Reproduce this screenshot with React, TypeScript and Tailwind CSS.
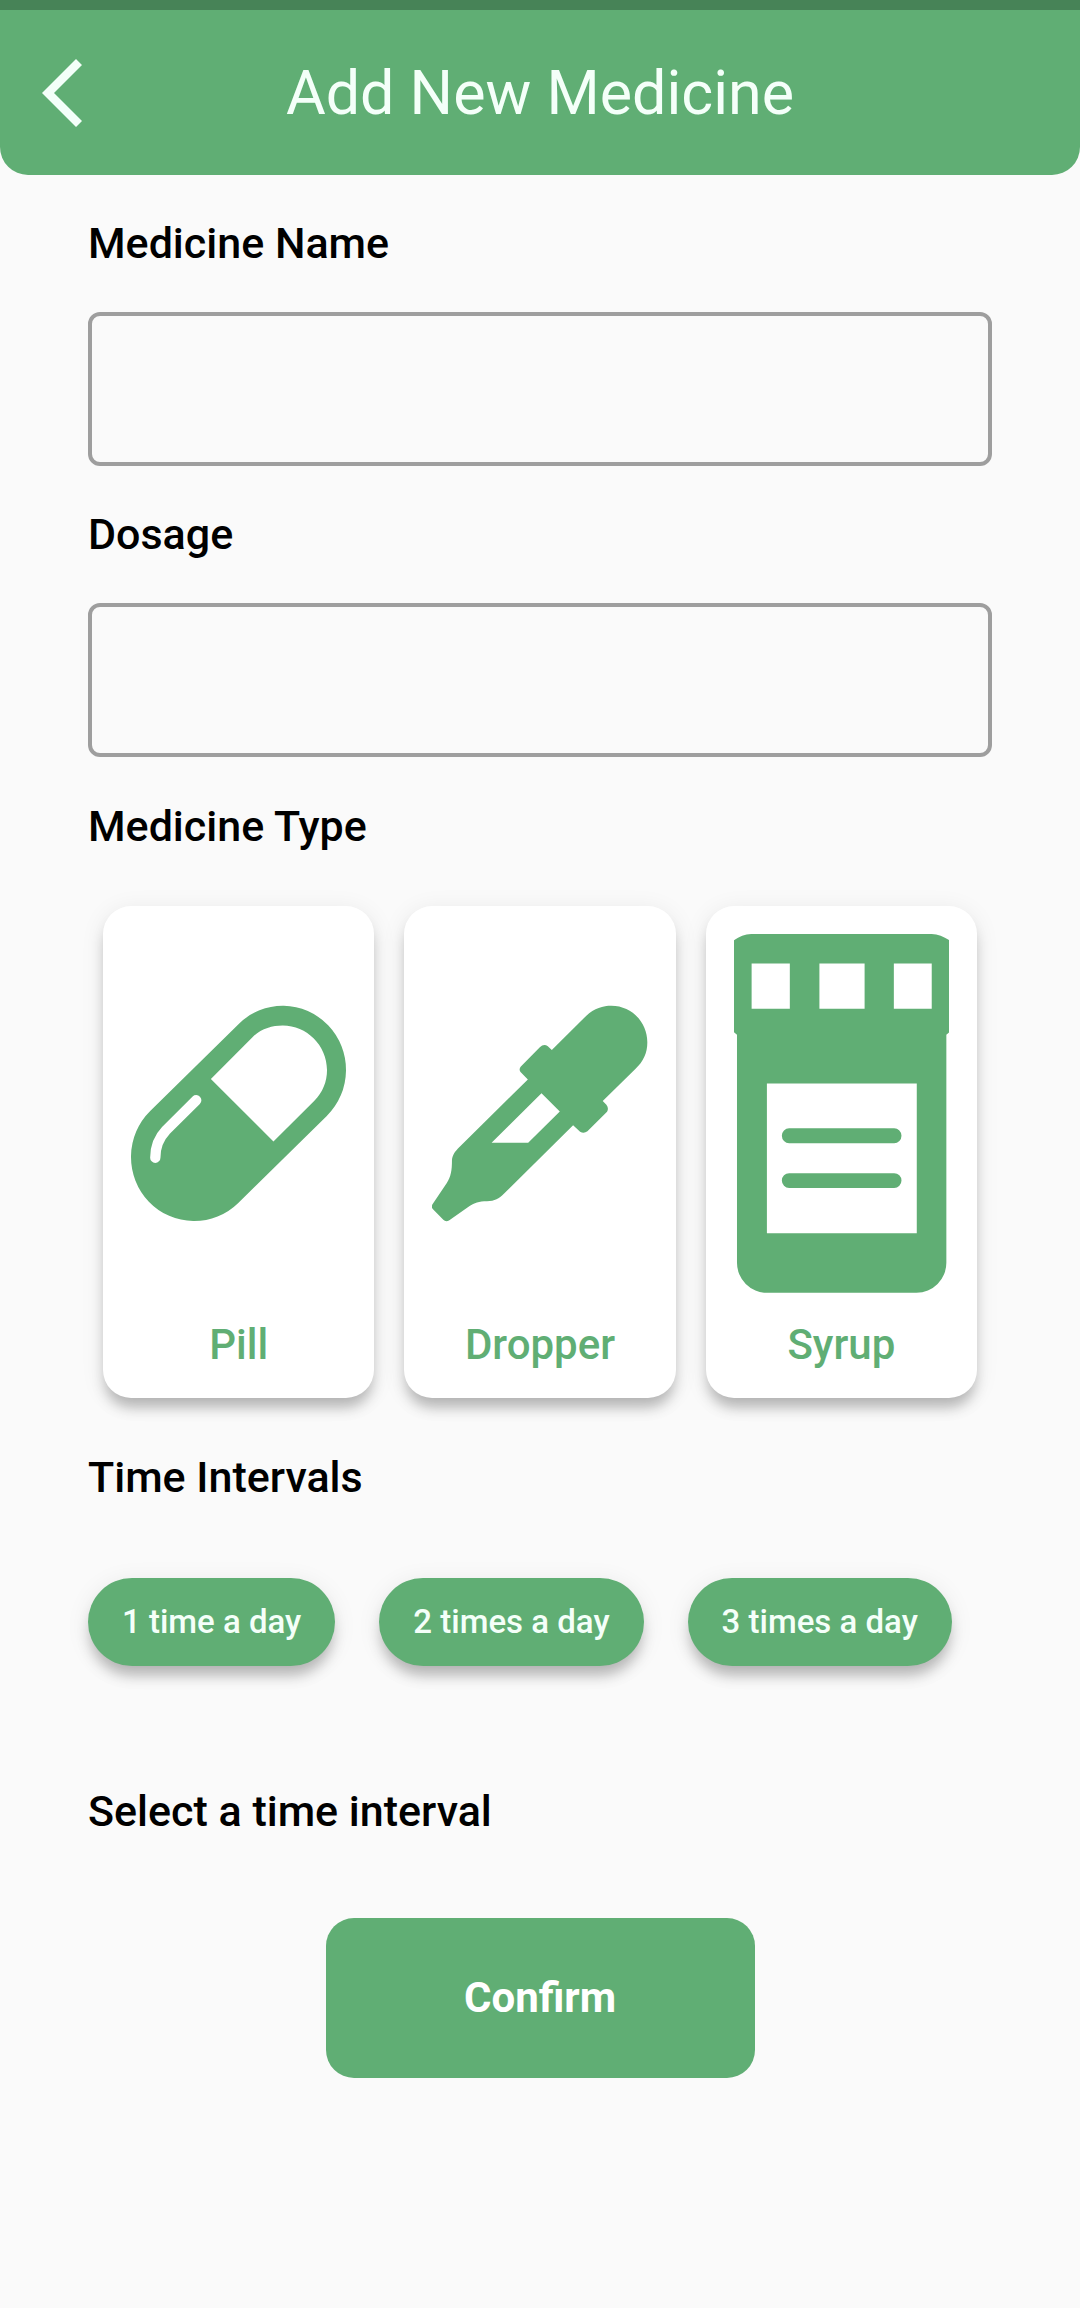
import { useState, type ReactNode } from "react";

function PillIcon() {
  return (
    <svg viewBox="122 132 647 1080" className="w-full" aria-hidden="true">
      <g transform="scale(1 1.014)">
        <path d="M578 533L312 791" stroke="#60ae74" strokeWidth="380" strokeLinecap="round" />
        <path d="M362 560L487 436C512 411 545 401 578 401C650 401 711 460 711 533C711 568 698 599 673 624L550 745Z" fill="#fff" />
        <path d="M318 623L227 712Q195 745 195 793" fill="none" stroke="#fff" strokeWidth="31" strokeLinecap="round" />
      </g>
    </svg>
  );
}

function DropperIcon() {
  return (
    <svg viewBox="127 132 647 1080" className="w-full" aria-hidden="true">
      <path
        transform="scale(1 1.014)"
        fill="#60ae74"
        fillRule="evenodd"
        d="M590 373C615 350 641 343 666 343C726 343 774 391 774 451C774 483 762 508 738 530L640 625L651 636Q659 646 653 657L594 715Q583 723 572 716L551 697L343 900C328 914 316 922 292 922C268 922 254 928 240 936L178 979Q168 984 161 977L130 946Q124 940 128 932L171 869C184 848 187 832 187 800C188 785 198 773 208 763L415 561L393 539Q387 531 394 523L451 466Q463 454 475 463L487 474ZM456 602L306 749H416L511 656Z"
      />
    </svg>
  );
}

function SyrupIcon() {
  return (
    <svg viewBox="129 132 648 1080" className="w-full" aria-hidden="true">
      <g transform="scale(1 1.014)">
        <path
          fill="#60ae74"
          fillRule="evenodd"
          d="M129 149Q155 130 187 130H720Q751 131 777 149V422L768 429V1106A90 89 0 0 1 678 1195H228A90 89 0 0 1 138 1106V429L129 422ZM182 218V352H297V218ZM386 218V352H522V218ZM610 218V352H724V218ZM228 574V1018H679V574Z"
        />
        <path d="M295 729H611M295 862H611" stroke="#60ae74" strokeWidth="44" strokeLinecap="round" />
      </g>
    </svg>
  );
}

const types: { name: string; icon: ReactNode }[] = [
  { name: "Pill", icon: <PillIcon /> },
  { name: "Dropper", icon: <DropperIcon /> },
  { name: "Syrup", icon: <SyrupIcon /> },
];

const intervals = ["1 time a day", "2 times a day", "3 times a day"];

function Field({ id, label }: { id: string; label: string }) {
  const [value, setValue] = useState("");
  return (
    <div className="mt-[43px] flex flex-col gap-11">
      <label htmlFor={id}>{label}</label>
      <input
        id={id}
        value={value}
        onChange={(e) => setValue(e.target.value)}
        className="h-[154px] w-full rounded-xl border-4 border-[#9e9e9e] bg-transparent px-8 outline-none"
      />
    </div>
  );
}

export default function App() {
  return (
    <div className="min-h-screen bg-[#fafafa] pb-20 font-['Roboto',sans-serif] text-[43px] leading-[50px] font-medium text-black">
      <div className="h-2.5 bg-[#478357]" />
      <header className="grid h-[165px] grid-cols-[124px_1fr_124px] items-center rounded-b-[28px] bg-[#60ae74] text-[#f4fff9]">
        <button type="button" aria-label="Back" className="flex h-full items-center pl-[42px]">
          <svg viewBox="0 0 40 68" className="h-[68px] w-10" aria-hidden="true">
            <path d="M34 0L40 6L12 34L40 62L34 68L0 34Z" fill="currentColor" />
          </svg>
        </button>
        <h1 className="text-center text-[61px] leading-[72px] font-normal">Add New Medicine</h1>
      </header>

      <main className="px-22">
        <Field id="medicine-name" label="Medicine Name" />
        <Field id="dosage" label="Dosage" />

        <h2 className="mt-11">Medicine Type</h2>
        <div className="mt-[55px] grid grid-cols-3 gap-[30px] px-[15px]">
          {types.map(({ name, icon }) => (
            <button
              key={name}
              type="button"
              className="flex flex-col items-center gap-[27px] rounded-[28px] bg-white px-7 pt-7 pb-7 text-[42px] text-[#60ae74] shadow-[0_4px_24px_rgba(0,0,0,0.08),0_12px_14px_-3px_rgba(0,0,0,0.25)]"
            >
              {icon}
              <span>{name}</span>
            </button>
          ))}
        </div>

        <h2 className="mt-[54px]">Time Intervals</h2>
        <div className="mt-[76px] flex flex-wrap gap-11">
          {intervals.map((text) => (
            <button
              key={text}
              type="button"
              className="h-22 rounded-full bg-[#60ae74] px-[34px] text-[33px] leading-10 text-[#f4fff9] shadow-[0_4px_24px_rgba(0,0,0,0.08),0_12px_14px_-3px_rgba(0,0,0,0.25)]"
            >
              {text}
            </button>
          ))}
        </div>

        <p className="mt-30">Select a time interval</p>
        <div className="mt-[82px] flex justify-center">
          <button type="submit" className="h-40 w-[429px] rounded-[28px] bg-[#60ae74] text-[42px] font-bold text-white">
            Confirm
          </button>
        </div>
      </main>
    </div>
  );
}
